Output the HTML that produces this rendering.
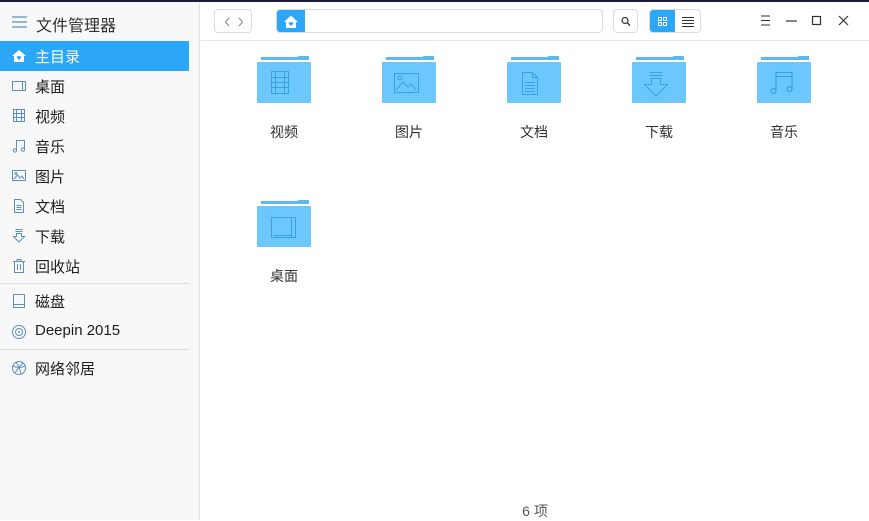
<!DOCTYPE html>
<html><head><meta charset="utf-8"><style>
*{margin:0;padding:0;box-sizing:border-box}
body{width:869px;height:520px;overflow:hidden;background:#fff;font-family:"Liberation Sans","Noto Sans CJK SC",sans-serif;position:relative;color:#303030}
.top{position:absolute;left:0;top:0;width:869px;height:2px;background:#1a1a3a}
.side{position:absolute;left:0;top:2px;width:200px;height:518px;background:#f8f8f8;border-right:1px solid #e2e2e2}
.t{position:absolute;font-size:15px;color:#303030}
.row{position:absolute;left:0;width:189px;height:30px}
.row span{position:absolute;left:35px;top:5px;font-size:15px;color:#1e1e1e}
.row svg{position:absolute;left:11px;top:7px}
.sel{background:#2ca7f8}
.sel span{color:#fff}
.sep{position:absolute;left:0;width:189px;height:1px;background:#dcdcdc}
.tb{position:absolute;left:201px;top:2px;right:0;height:39px;border-bottom:1px solid #e6e6e6;background:#fff}
.btn{position:absolute;border:1px solid #dcdcdc;border-radius:4px;background:#fff}
.f{position:absolute;width:54px;height:48px}
.lbl{position:absolute;width:100px;text-align:center;font-size:14px;color:#303030}
</style></head><body>
<div class="top"></div>
<div class="side">
<svg style="position:absolute;left:12px;top:14px" width="16" height="12"><path d="M0 1H15M0 6H15M0 11H15" stroke="#5a8fc0" stroke-width="1.2"/></svg>
<div class="t" style="left:36px;top:10px;font-size:16px">文件管理器</div>
<div class="row sel" style="top:39px"><svg width="16" height="16"><path d="M1 8L8 2L15 8H13V14H3V8Z" fill="#fff"/><path d="M8 12L6 10A1.2 1.2 0 0 1 8 8.6A1.2 1.2 0 0 1 10 10Z" fill="#2ca7f8"/></svg><span>主目录</span></div>
<div class="row" style="top:69px"><svg width="16" height="16"><rect x="1.5" y="3.5" width="13" height="9" fill="none" stroke="#5a8fc0"/><path d="M11.5 3.5V12.5" stroke="#5a8fc0"/></svg><span>桌面</span></div>
<div class="row" style="top:99px"><svg width="16" height="16"><rect x="2.5" y="1.5" width="11" height="12" fill="none" stroke="#5a8fc0"/><path d="M5.5 1.5V13.5M10.5 1.5V13.5M2.5 5.5H13.5M2.5 9.5H13.5" stroke="#5a8fc0"/></svg><span>视频</span></div>
<div class="row" style="top:129px"><svg width="16" height="16"><path d="M5.5 12V2.5H13.5V11" fill="none" stroke="#5a8fc0"/><circle cx="4" cy="12.5" r="1.6" fill="none" stroke="#5a8fc0"/><circle cx="12" cy="11.5" r="1.6" fill="none" stroke="#5a8fc0"/></svg><span>音乐</span></div>
<div class="row" style="top:159px"><svg width="16" height="16"><rect x="1.5" y="2.5" width="13" height="10" fill="none" stroke="#5a8fc0"/><path d="M3 11L6.5 7L9 10L11 8L13 11" fill="none" stroke="#5a8fc0"/><circle cx="5" cy="5.5" r="1" fill="none" stroke="#5a8fc0"/></svg><span>图片</span></div>
<div class="row" style="top:189px"><svg width="16" height="16"><path d="M3.5 1.5H9.5L12.5 4.5V14.5H3.5Z" fill="none" stroke="#5a8fc0"/><path d="M5.5 7.5H10.5M5.5 9.5H10.5M5.5 11.5H10.5" stroke="#5a8fc0"/></svg><span>文档</span></div>
<div class="row" style="top:219px"><svg width="16" height="16"><path d="M4.5 1.5H11.5M4.5 3.5H11.5M5.5 5.5V8.5H2.5L8 14L13.5 8.5H10.5V5.5Z" fill="none" stroke="#5a8fc0"/></svg><span>下载</span></div>
<div class="row" style="top:249px"><svg width="16" height="16"><path d="M2 3.5H14M6 3.5V1.5H10V3.5M3.5 3.5V14.5H12.5V3.5M6.5 6V12M9.5 6V12" fill="none" stroke="#5a8fc0"/></svg><span>回收站</span></div>
<div class="sep" style="top:281px"></div>
<div class="row" style="top:284px"><svg width="16" height="16"><rect x="2.5" y="1.5" width="11" height="13" fill="none" stroke="#5a8fc0"/><path d="M2.5 11.5H13.5" stroke="#5a8fc0"/></svg><span>磁盘</span></div>
<div class="row" style="top:315px"><svg width="16" height="16"><circle cx="8" cy="8" r="6.5" fill="none" stroke="#5a8fc0"/><circle cx="8" cy="8" r="3.5" fill="none" stroke="#5a8fc0"/><circle cx="8" cy="8" r="1" fill="#5a8fc0"/></svg><span>Deepin 2015</span></div>
<div class="sep" style="top:347px"></div>
<div class="row" style="top:351px"><svg width="16" height="16"><circle cx="8" cy="8" r="6.5" fill="none" stroke="#5a8fc0"/><path d="M2 6Q8 9 14 6M4 13Q8 7 12 3M5 2Q9 8 10 14" fill="none" stroke="#5a8fc0"/></svg><span>网络邻居</span></div>
</div>
<div class="tb">
<div class="btn" style="left:13px;top:7px;width:38px;height:24px"><svg width="38" height="24"><path d="M14 8L10.5 12L14 16M24 8L27.5 12L24 16" fill="none" stroke="#888" stroke-width="1"/></svg></div>
<div class="btn" style="left:75px;top:7px;width:327px;height:24px;overflow:hidden"><div style="position:absolute;left:0;top:0;width:28px;height:24px;background:#2ca7f8"><svg width="28" height="22" style="position:absolute;top:0"><path d="M7 12L14 5.5L21 12H19V18H9V12Z" fill="#fff"/><path d="M14 16L12 14A1.2 1.2 0 0 1 14 12.6A1.2 1.2 0 0 1 16 14Z" fill="#2ca7f8"/></svg></div></div>
<div class="btn" style="left:412px;top:7px;width:25px;height:24px"><svg width="25" height="24"><circle cx="11" cy="10.5" r="3" fill="none" stroke="#333" stroke-width="1.2"/><path d="M13 12.5L16 15.5" stroke="#333" stroke-width="1.4"/></svg></div>
<div class="btn" style="left:448px;top:7px;width:52px;height:24px;overflow:hidden"><div style="position:absolute;left:0;top:0;width:25px;height:24px;background:#2ca7f8"></div><svg width="52" height="24" style="position:absolute;left:0;top:0"><path d="M8.5 7.5h3v3h-3zM13.5 7.5h3v3h-3zM8.5 12.5h3v3h-3zM13.5 12.5h3v3h-3z" fill="none" stroke="#fff"/><path d="M32 7.5H44M32 10.5H44M32 13.5H44M32 16.5H44" stroke="#333"/></svg></div>
<svg style="position:absolute;left:556px;top:12px" width="100" height="14"><path d="M4 2H13M4 6.5H13M4 11H13" stroke="#333"/><path d="M29 7H40" stroke="#333" stroke-width="1.2"/><rect x="55.5" y="2.5" width="8" height="8" fill="none" stroke="#333" stroke-width="1.2"/><path d="M82 2L91 11M91 2L82 11" stroke="#333" stroke-width="1.2"/></svg>
</div>

<svg width="0" height="0" style="position:absolute"><defs>
<g id="fd"><path d="M4 1H40L42 0H52V4H4Z" fill="#5ab8f2"/><rect x="0" y="6" width="54" height="41" rx="1" fill="#6cc7fd"/></g>
</defs></svg>

<svg class="f" style="left:257px;top:56px" viewBox="0 0 54 48"><use href="#fd"/><g fill="none" stroke="#3aa0e8"><rect x="14.5" y="15.5" width="17" height="22"/><path d="M18.5 15.5V37.5M27.5 15.5V37.5M14.5 21.5H31.5M14.5 26.5H31.5M14.5 31.5H31.5"/></g></svg>
<div class="lbl" style="left:234px;top:122px">视频</div>
<svg class="f" style="left:382px;top:56px" viewBox="0 0 54 48"><use href="#fd"/><g fill="none" stroke="#3aa0e8"><rect x="12.5" y="17.5" width="24" height="19"/><path d="M14 34L21 26L26 31L29 28L34 34"/><circle cx="18" cy="22" r="2"/></g></svg>
<div class="lbl" style="left:359px;top:122px">图片</div>
<svg class="f" style="left:507px;top:56px" viewBox="0 0 54 48"><use href="#fd"/><g fill="none" stroke="#3aa0e8"><path d="M15.5 16.5H25.5L30.5 21.5V38.5H15.5Z M25.5 16.5V21.5H30.5"/><path d="M18 26.5H28M18 29.5H28M18 32.5H28M18 35.5H28"/></g></svg>
<div class="lbl" style="left:484px;top:122px">文档</div>
<svg class="f" style="left:632px;top:56px" viewBox="0 0 54 48"><use href="#fd"/><g fill="none" stroke="#3aa0e8"><path d="M18 16.5H30M18 19.5H30M19.5 22.5V28.5H12.5L24 40L35.5 28.5H28.5V22.5Z"/></g></svg>
<div class="lbl" style="left:609px;top:122px">下载</div>
<svg class="f" style="left:757px;top:56px" viewBox="0 0 54 48"><use href="#fd"/><g fill="none" stroke="#3aa0e8" stroke-width="1.2"><path d="M19 35V16.5H35V33M19 20.5H35"/><circle cx="16.5" cy="35" r="2.5"/><circle cx="32.5" cy="33" r="2.5"/></g></svg>
<div class="lbl" style="left:734px;top:122px">音乐</div>
<svg class="f" style="left:257px;top:200px" viewBox="0 0 54 48"><use href="#fd"/><g fill="none" stroke="#3aa0e8"><rect x="14.5" y="17.5" width="24" height="20"/><path d="M34.5 17.5V37.5M16.5 35.5H34.5"/></g></svg>
<div class="lbl" style="left:234px;top:266px">桌面</div>
<div style="position:absolute;left:485px;top:501px;width:100px;text-align:center;font-size:14px;color:#555">6 项</div>
</body></html>
